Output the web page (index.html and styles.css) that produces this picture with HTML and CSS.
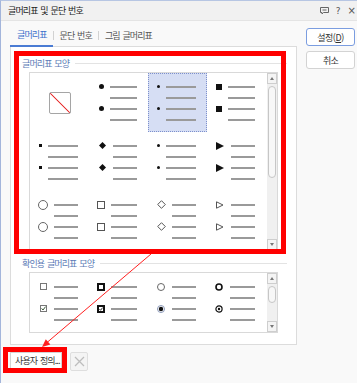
FILE: index.html
```html
<!DOCTYPE html>
<html lang="ko">
<head>
    <meta charset="UTF-8">
    <meta name="viewport" content="width=device-width, initial-scale=1.0">
    <title>글머리표 및 문단 번호</title>
    <link rel="stylesheet" href="styles.css">
</head>
<body>
    <div class="window">
        <div class="titlebar">
            <span class="title">글머리표 및 문단 번호</span>
            <div class="title-tools">
                <svg class="ico-note" width="9" height="8" viewBox="0 0 9 8">
                    <path d="M.5 .5h8v5h-5l-1.5 1.5v-1.5h-1.5z" fill="none" stroke="#666"/>
                    <path d="M2.5 3h4" stroke="#666"/>
                </svg>
                <span class="ico-help">?</span>
                <span class="ico-close">×</span>
            </div>
        </div>

        <div class="content">
            <div class="main">
                <div class="tabs">
                    <span class="tab active">글머리표</span>
                    <span class="tab-sep"></span>
                    <span class="tab">문단 번호</span>
                    <span class="tab-sep"></span>
                    <span class="tab">그림 글머리표</span>
                </div>

                <div class="panel">
                    <div class="group">
                        <div class="group-title"><span>글머리표 모양</span><i class="group-line"></i></div>
                        <div class="listbox listbox-tall">
                            <div class="grid">
                                <!-- row 1 -->
                                <div class="cell cell-none"><span class="none-box"></span></div>
                                <div class="cell cell-dot">
                                    <i class="b dot5"></i><i class="ln"></i>
                                    <i></i><i class="ln"></i>
                                    <i class="b dot5"></i><i class="ln"></i>
                                    <i></i><i class="ln"></i>
                                </div>
                                <div class="cell cell-small selected">
                                    <i class="b dot3"></i><i class="ln"></i>
                                    <i></i><i class="ln"></i>
                                    <i class="b dot3"></i><i class="ln"></i>
                                    <i></i><i class="ln"></i>
                                </div>
                                <div class="cell cell-dot">
                                    <i class="b sq6"></i><i class="ln"></i>
                                    <i></i><i class="ln"></i>
                                    <i class="b sq6"></i><i class="ln"></i>
                                    <i></i><i class="ln"></i>
                                </div>
                                <!-- row 2 -->
                                <div class="cell cell-small">
                                    <i class="b sq3"></i><i class="ln"></i>
                                    <i></i><i class="ln"></i>
                                    <i class="b sq3"></i><i class="ln"></i>
                                    <i></i><i class="ln"></i>
                                </div>
                                <div class="cell cell-wide">
                                    <svg class="b" width="7" height="7" viewBox="0 0 7 7"><path d="M3.5 0L7 3.5 3.5 7 0 3.5z" fill="#111"/></svg><i class="ln"></i>
                                    <i></i><i class="ln"></i>
                                    <svg class="b" width="7" height="7" viewBox="0 0 7 7"><path d="M3.5 0L7 3.5 3.5 7 0 3.5z" fill="#111"/></svg><i class="ln"></i>
                                    <i></i><i class="ln"></i>
                                </div>
                                <div class="cell cell-small">
                                    <i class="b dot3"></i><i class="ln"></i>
                                    <i></i><i class="ln"></i>
                                    <i class="b dot3"></i><i class="ln"></i>
                                    <i></i><i class="ln"></i>
                                </div>
                                <div class="cell cell-wide">
                                    <svg class="b" width="8" height="8" viewBox="0 0 8 8"><path d="M0 0L8 4 0 8z" fill="#111"/></svg><i class="ln"></i>
                                    <i></i><i class="ln"></i>
                                    <svg class="b" width="8" height="8" viewBox="0 0 8 8"><path d="M0 0L8 4 0 8z" fill="#111"/></svg><i class="ln"></i>
                                    <i></i><i class="ln"></i>
                                </div>
                                <!-- row 3 -->
                                <div class="cell cell-ring">
                                    <i class="b ring10"></i><i class="ln"></i>
                                    <i></i><i class="ln"></i>
                                    <i class="b ring10"></i><i class="ln"></i>
                                    <i></i><i class="ln"></i>
                                </div>
                                <div class="cell cell-box">
                                    <i class="b box8"></i><i class="ln"></i>
                                    <i></i><i class="ln"></i>
                                    <i class="b box8"></i><i class="ln"></i>
                                    <i></i><i class="ln"></i>
                                </div>
                                <div class="cell cell-ring">
                                    <svg class="b" width="9" height="9" viewBox="0 0 9 9"><path d="M4.5 .7L8.3 4.5 4.5 8.3 .7 4.5z" fill="none" stroke="#555"/></svg><i class="ln"></i>
                                    <i></i><i class="ln"></i>
                                    <svg class="b" width="9" height="9" viewBox="0 0 9 9"><path d="M4.5 .7L8.3 4.5 4.5 8.3 .7 4.5z" fill="none" stroke="#555"/></svg><i class="ln"></i>
                                    <i></i><i class="ln"></i>
                                </div>
                                <div class="cell cell-wide">
                                    <svg class="b" width="8" height="8" viewBox="0 0 8 8"><path d="M.5 .8L7 4 .5 7.2z" fill="none" stroke="#555"/></svg><i class="ln"></i>
                                    <i></i><i class="ln"></i>
                                    <svg class="b" width="8" height="8" viewBox="0 0 8 8"><path d="M.5 .8L7 4 .5 7.2z" fill="none" stroke="#555"/></svg><i class="ln"></i>
                                    <i></i><i class="ln"></i>
                                </div>
                            </div>
                            <div class="scrollbar">
                                <span class="sb-btn"><i class="sb-up"></i></span>
                                <span class="sb-thumb sb-thumb-tall"></span>
                                <span class="sb-space"></span>
                                <span class="sb-btn"><i class="sb-down"></i></span>
                            </div>
                        </div>
                    </div>

                    <div class="group group-check">
                        <div class="group-title"><span>확인용 글머리표 모양</span><i class="group-line"></i></div>
                        <div class="listbox listbox-short">
                            <div class="grid">
                                <div class="cell cell-wide">
                                    <svg class="b" width="7" height="7" viewBox="0 0 7 7"><rect x=".5" y=".5" width="6" height="6" fill="#fff" stroke="#777"/></svg><i class="ln"></i>
                                    <i></i><i class="ln"></i>
                                    <svg class="b" width="7" height="7" viewBox="0 0 7 7"><rect x=".5" y=".5" width="6" height="6" fill="#fff" stroke="#777"/><path d="M1.6 3.4L3 5 5.6 1.6" fill="none" stroke="#3a5a3a" stroke-width="1"/></svg><i class="ln"></i>
                                    <i></i><i class="ln"></i>
                                </div>
                                <div class="cell cell-box">
                                    <svg class="b" width="8" height="8" viewBox="0 0 8 8"><rect x="1" y="1" width="6" height="6" fill="#fff" stroke="#111" stroke-width="2"/></svg><i class="ln"></i>
                                    <i></i><i class="ln"></i>
                                    <svg class="b" width="8" height="8" viewBox="0 0 8 8"><rect x="1" y="1" width="6" height="6" fill="#fff" stroke="#111" stroke-width="2"/><path d="M2.4 4L3.6 5.3 5.6 2.6" fill="none" stroke="#333" stroke-width="1"/></svg><i class="ln"></i>
                                    <i></i><i class="ln"></i>
                                </div>
                                <div class="cell cell-wide">
                                    <svg class="b" width="8" height="8" viewBox="0 0 8 8"><circle cx="4" cy="4" r="3.5" fill="#fff" stroke="#666"/></svg><i class="ln"></i>
                                    <i></i><i class="ln"></i>
                                    <svg class="b" width="8" height="8" viewBox="0 0 8 8"><circle cx="4" cy="4" r="3.5" fill="#fff" stroke="#8a98b8"/><circle cx="4" cy="4" r="2.2" fill="#111"/></svg><i class="ln"></i>
                                    <i></i><i class="ln"></i>
                                </div>
                                <div class="cell cell-ring2">
                                    <svg class="b" width="8" height="8" viewBox="0 0 8 8"><circle cx="4" cy="4" r="3" fill="#fff" stroke="#111" stroke-width="1.6"/></svg><i class="ln"></i>
                                    <i></i><i class="ln"></i>
                                    <svg class="b" width="8" height="8" viewBox="0 0 8 8"><circle cx="4" cy="4" r="3.1" fill="#fff" stroke="#111" stroke-width="1.2"/><circle cx="4" cy="4" r="1.2" fill="#111"/></svg><i class="ln"></i>
                                    <i></i><i class="ln"></i>
                                </div>
                            </div>
                            <div class="scrollbar">
                                <span class="sb-btn"><i class="sb-up"></i></span>
                                <span class="sb-thumb sb-thumb-short"></span>
                                <span class="sb-space"></span>
                                <span class="sb-btn"><i class="sb-down"></i></span>
                            </div>
                        </div>
                    </div>
                </div>

                <div class="bottom-bar">
                    <button class="btn btn-custom">사용자 정의...</button>
                    <button class="btn-icon">
                        <svg width="11" height="11" viewBox="0 0 11 11"><path d="M1 1L10 10M10 1L1 10" stroke="#bdbdbd" stroke-width="1.3"/></svg>
                    </button>
                </div>
            </div>

            <div class="side">
                <button class="btn btn-primary">설정(<u>D</u>)</button>
                <button class="btn">취소</button>
            </div>
        </div>

        <!-- 주석 표시 -->
        <div class="mark mark-list"></div>
        <div class="mark mark-custom"></div>
        <svg class="arrow" width="357" height="383" viewBox="0 0 357 383">
            <path d="M151 254L47 342.5" stroke="#ff2020" stroke-width="1"/>
            <path d="M42 347L50.4 344.5 45.8 339.2z" fill="#ff2020"/>
        </svg>
    </div>
</body>
</html>
```

FILE: styles.css
```css
html, body {
    margin: 0;
    padding: 0;
}
body {
    width: 357px;
    height: 383px;
    overflow: hidden;
    background: #f9f9f9;
    font-family: "Noto Sans CJK KR", "Noto Sans", sans-serif;
    font-size: 9px;
    letter-spacing: -0.9px;
    word-spacing: 1.2px;
    color: #333;
}
.window {
    position: relative;
    height: 100%;
    box-sizing: border-box;
    border-top: 1px solid #b7c6e3;
    border-left: 1px solid #a3b5db;
}

/* title bar */
.titlebar {
    height: 19px;
    display: flex;
    align-items: center;
    justify-content: space-between;
    padding-left: 7px;
    background: #f1f1f1;
    border-bottom: 1px solid #e4e4e4;
}
.title {
    color: #222;
}
.title-tools {
    display: flex;
    align-items: center;
    gap: 7px;
    color: #555;
    letter-spacing: 0;
}
.ico-help {
    font-family: "DejaVu Sans", sans-serif;
    font-size: 9px;
}
.ico-close {
    font-family: "DejaVu Sans", sans-serif;
    font-size: 10px;
    margin-right: 1px;
}

/* layout */
.content {
    display: flex;
    padding-left: 9px;
}
.main {
    width: 287px;
}
.side {
    width: 49px;
    margin-left: 9px;
    padding-top: 7px;
    display: flex;
    flex-direction: column;
    gap: 5px;
}

/* tabs */
.tabs {
    height: 26px;
    display: flex;
    align-items: stretch;
    margin-bottom: -1px;
    position: relative;
    z-index: 1;
}
.tab {
    display: flex;
    align-items: center;
    padding: 2px 6px 0 6px;
    color: #555;
}
.tab.active {
    padding: 2px 6px 0 7px;
    color: #3b6fcb;
    border-bottom: 2px solid #4a7bd3;
}
.tab-sep {
    width: 1px;
    height: 9px;
    align-self: center;
    margin-top: 2px;
    background: #d2d2d2;
}

/* panel */
.panel {
    height: 299px;
    box-sizing: border-box;
    background: #fff;
    border: 1px solid #dcdcdc;
    padding: 10px 9px 11px 11px;
}
.group-title {
    height: 12px;
    display: flex;
    align-items: center;
    gap: 6px;
    color: #5c7bb6;
}
.group-line {
    flex: 1;
    height: 1px;
    background: #e3e3e3;
}
.group-check {
    margin-top: 6px;
}
.listbox {
    width: 249px;
    margin: 3px 0 0 7px;
    box-sizing: border-box;
    border: 1px solid #d9d9d9;
    display: flex;
    background: #fff;
}
.listbox-tall {
    height: 179px;
}
.listbox-short {
    height: 61px;
}
.grid {
    width: 236px;
    margin-right: 1px;
    display: grid;
    grid-template-columns: repeat(4, 59px);
    grid-auto-rows: 59px;
    overflow: hidden;
}

/* cells */
.cell {
    --s: 21px;
    --g: 7px;
    display: grid;
    grid-template-columns: var(--s) 1fr;
    grid-auto-rows: 11px;
    align-items: center;
    padding: 8px 11px 0 0;
    box-sizing: border-box;
}
.cell i {
    display: block;
}
.cell-dot { --s: 21px; --g: 6px; }
.cell-small { --s: 18px; --g: 6px; }
.cell-wide { --s: 24px; --g: 7px; }
.cell-ring { --s: 24px; --g: 6px; }
.cell-box { --s: 22px; --g: 6px; }
.cell-ring2 { --s: 23px; --g: 7px; }
.cell.selected {
    background: #d6def4;
    outline: 1px dotted #7d90cc;
    outline-offset: -1px;
}
.cell-none {
    display: flex;
    align-items: center;
    justify-content: center;
    padding: 0;
}
.none-box {
    width: 22px;
    height: 22px;
    box-sizing: border-box;
    border: 1.5px solid #a5a5a5;
    border-radius: 2px;
    background: linear-gradient(to top right, transparent calc(50% - 0.8px), #e83030 calc(50% - 0.4px), #e83030 calc(50% + 0.4px), transparent calc(50% + 0.8px));
}
.b {
    display: block;
    justify-self: end;
    margin-right: var(--g);
}
.ln {
    height: 2px;
    background: #9a9a9a;
}
.dot5 {
    width: 5px;
    height: 5px;
    border-radius: 50%;
    background: #111;
}
.dot3 {
    width: 3px;
    height: 3px;
    border-radius: 50%;
    background: #111;
}
.sq6 {
    width: 6px;
    height: 6px;
    background: #111;
}
.sq3 {
    width: 3px;
    height: 3px;
    background: #111;
}
.ring10 {
    width: 10px;
    height: 10px;
    box-sizing: border-box;
    border: 1px solid #666;
    border-radius: 50%;
}
.box8 {
    width: 8px;
    height: 8px;
    box-sizing: border-box;
    border: 1px solid #555;
}

/* scrollbar */
.scrollbar {
    width: 10px;
    display: flex;
    flex-direction: column;
    background: #f0f0f0;
}
.sb-btn {
    height: 11px;
    box-sizing: border-box;
    border: 1px solid #cecece;
    background: #f4f4f4;
    display: flex;
    align-items: center;
    justify-content: center;
}
.sb-up, .sb-down {
    width: 0;
    height: 0;
    border-left: 2.5px solid transparent;
    border-right: 2.5px solid transparent;
}
.sb-up {
    border-bottom: 3px solid #777;
}
.sb-down {
    border-top: 3px solid #777;
}
.sb-thumb {
    margin: 2px 1px 0 1px;
    box-sizing: border-box;
    border: 1px solid #c6c6c6;
    border-radius: 4px;
    background: #f7f7f7;
}
.sb-thumb-tall {
    height: 92px;
}
.sb-thumb-short {
    height: 17px;
}
.sb-space {
    flex: 1;
}

/* buttons */
.btn {
    font-family: inherit;
    font-size: inherit;
    letter-spacing: inherit;
    word-spacing: inherit;
    color: #333;
    background: #fff;
    border: 1px solid #d3d3d3;
    border-radius: 3px;
    height: 18px;
    padding: 0;
    box-sizing: border-box;
}
.btn-primary {
    border-color: #7b9de0;
    letter-spacing: -0.5px;
}
.btn u {
    text-underline-offset: 1px;
}
.bottom-bar {
    display: flex;
    gap: 8px;
    margin-top: 7px;
}
.btn-custom {
    width: 52px;
    height: 17px;
    border-radius: 0;
    text-align: left;
    padding-left: 4px;
    white-space: nowrap;
}
.btn-icon {
    width: 18px;
    height: 19px;
    padding: 0;
    border: 1px solid #dedede;
    border-radius: 2px;
    background: #f4f4f4;
    display: flex;
    align-items: center;
    justify-content: center;
}

/* red annotation */
.mark {
    position: absolute;
    box-sizing: border-box;
    border: 5px solid #ff0000;
}
.mark-list {
    left: 13px;
    top: 50px;
    width: 272px;
    height: 203px;
}
.mark-custom {
    left: 2px;
    top: 346px;
    width: 64px;
    height: 26px;
}
.arrow {
    position: absolute;
    left: -1px;
    top: -1px;
    pointer-events: none;
}
```
